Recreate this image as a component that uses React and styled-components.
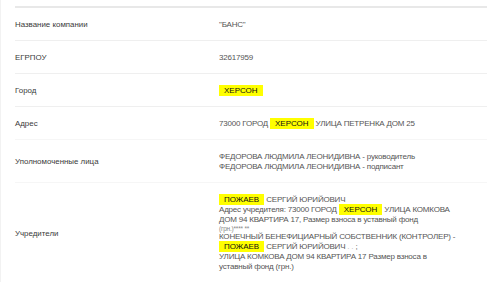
import React from "react";
import styled, { createGlobalStyle } from "styled-components";

const Global = createGlobalStyle`
  html, body { margin: 0; padding: 0; background: #fff; }
  body { font-family: "Liberation Sans", Arial, sans-serif; }
`;

const Page = styled.div`
  width: 500px;
  height: 282px;
  overflow: hidden;
  border-left: 1px solid #f2f2f2;
  box-sizing: border-box;
  padding: 6px 13px 0 14px;
`;

const Table = styled.div`
  border-top: 2px solid #e8e8e8;
`;

const Row = styled.div`
  display: grid;
  grid-template-columns: 204px 1fr;
  align-items: center;
  padding: 12px 0 10px;
  border-bottom: 1px solid ${(p) => (p.$faint ? "#f6f6f6" : "#efefef")};
  line-height: 10px;
`;

const Label = styled.div`
  color: #3a3a3a;
  font-size: 7.9px;
  line-height: 10px;
`;

const Value = styled.div`
  color: #555;
  font-size: 8px;
  line-height: 10px;
  letter-spacing: -0.2px;
  white-space: nowrap;
`;

const Mark = styled.span`
  background: #ffff00;
  color: #111;
  padding: 1px 5px 1px;
  letter-spacing: 0;
`;

const Small = styled.div`
  font-size: 6.5px;
  line-height: 7px;
  color: #888;
`;

const Dim = styled.span`
  color: #bbb;
`;

export default function App() {
  return (
    <>
      <Global />
      <Page>
        <Table>
          <Row>
            <Label>Название компании</Label>
            <Value>"БАНС"</Value>
          </Row>
          <Row>
            <Label>ЕГРПОУ</Label>
            <Value>32617959</Value>
          </Row>
          <Row>
            <Label>Город</Label>
            <Value>
              <Mark>ХЕРСОН</Mark>
            </Value>
          </Row>
          <Row $faint>
            <Label>Адрес</Label>
            <Value>
              73000 ГОРОД <Mark>ХЕРСОН</Mark> УЛИЦА ПЕТРЕНКА ДОМ 25
            </Value>
          </Row>
          <Row $faint>
            <Label>Уполномоченные лица</Label>
            <Value>
              ФЕДОРОВА ЛЮДМИЛА ЛЕОНИДИВНА - руководитель
              <br />
              ФЕДОРОВА ЛЮДМИЛА ЛЕОНИДИВНА - подписант
            </Value>
          </Row>
          <Row>
            <Label>Учредители</Label>
            <Value>
              <Mark>ПОЖАЕВ</Mark> СЕРГИЙ ЮРИЙОВИЧ
              <br />
              Адрес учредителя: 73000 ГОРОД <Mark>ХЕРСОН</Mark> УЛИЦА КОМКОВА
              <br />
              ДОМ 94 КВАРТИРА 17, Размер взноса в уставный фонд
              <Small>(грн.)**** **</Small>
              КОНЕЧНЫЙ БЕНЕФИЦИАРНЫЙ СОБСТВЕННИК (КОНТРОЛЕР) -
              <br />
              <Mark>ПОЖАЕВ</Mark> СЕРГИЙ ЮРИЙОВИЧ <Dim>. .</Dim> ;
              <br />
              УЛИЦА КОМКОВА ДОМ 94 КВАРТИРА 17 Размер взноса в
              <br />
              уставный фонд (грн.)
            </Value>
          </Row>
        </Table>
      </Page>
    </>
  );
}
